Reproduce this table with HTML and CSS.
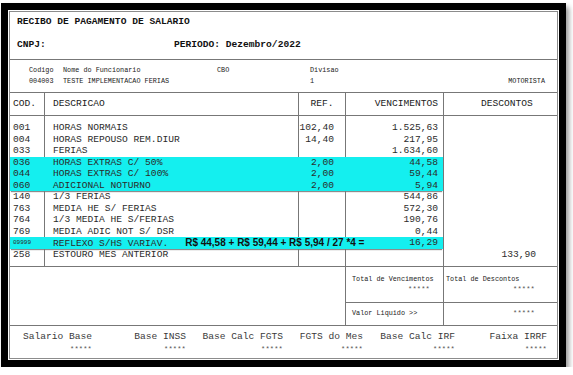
FILE: index.html
```html
<!DOCTYPE html>
<html lang="pt">
<head>
<meta charset="utf-8">
<title>Recibo de Pagamento de Salario</title>
<link rel="stylesheet" href="styles.css">
</head>
<body>
<div class="frame">
  <div class="sheet">
    <div class="head">
      <div class="title">RECIBO DE PAGAMENTO DE SALARIO</div>
      <div class="cnpj"><span class="cnpj-l">CNPJ:</span><span>PERIODO: Dezembro/2022</span></div>
    </div>
    <div class="emp">
      <div class="emp-row"><span>Codigo</span><span>Nome do Funcionario</span><span>CBO</span><span>Divisao</span><span></span></div>
      <div class="emp-row emp-val"><span>004003</span><span>TESTE IMPLEMENTACAO FERIAS</span><span></span><span>1</span><span>MOTORISTA</span></div>
    </div>
    <div class="tbl">
      <div class="r hdr">
        <div class="l"><div class="c1">COD.</div><div class="c2">DESCRICAO</div><div class="c3 ctr">REF.</div><div class="c4">VENCIMENTOS</div></div>
        <div class="c5 dhd">DESCONTOS</div>
      </div>
      <div class="r sp"><div class="l"><div class="c1"></div><div class="c2"></div><div class="c3"></div><div class="c4"></div></div><div class="c5"></div></div>
      <div class="r"><div class="l"><div class="c1">001</div><div class="c2">HORAS NORMAIS</div><div class="c3">102,40</div><div class="c4">1.525,63</div></div><div class="c5"></div></div>
      <div class="r"><div class="l"><div class="c1">004</div><div class="c2">HORAS REPOUSO REM.DIUR</div><div class="c3">14,40</div><div class="c4">217,95</div></div><div class="c5"></div></div>
      <div class="r"><div class="l"><div class="c1">033</div><div class="c2">FERIAS</div><div class="c3"></div><div class="c4">1.634,60</div></div><div class="c5"></div></div>
      <div class="r hl"><div class="l"><div class="c1">036</div><div class="c2">HORAS EXTRAS C/ 50%</div><div class="c3">2,00</div><div class="c4">44,58</div></div><div class="c5"></div></div>
      <div class="r hl"><div class="l"><div class="c1">044</div><div class="c2">HORAS EXTRAS C/ 100%</div><div class="c3">2,00</div><div class="c4">59,44</div></div><div class="c5"></div></div>
      <div class="r hl hl-end"><div class="l"><div class="c1">060</div><div class="c2">ADICIONAL NOTURNO</div><div class="c3">2,00</div><div class="c4">5,94</div></div><div class="c5"></div></div>
      <div class="r"><div class="l"><div class="c1">140</div><div class="c2">1/3 FERIAS</div><div class="c3"></div><div class="c4">544,86</div></div><div class="c5"></div></div>
      <div class="r"><div class="l"><div class="c1">763</div><div class="c2">MEDIA HE S/ FERIAS</div><div class="c3"></div><div class="c4">572,30</div></div><div class="c5"></div></div>
      <div class="r"><div class="l"><div class="c1">764</div><div class="c2">1/3 MEDIA HE S/FERIAS</div><div class="c3"></div><div class="c4">190,76</div></div><div class="c5"></div></div>
      <div class="r"><div class="l"><div class="c1">769</div><div class="c2">MEDIA ADIC NOT S/ DSR</div><div class="c3"></div><div class="c4">0,44</div></div><div class="c5"></div></div>
      <div class="r hl hl-end"><div class="l"><div class="c1 small">09999</div><div class="c2"><span>REFLEXO S/HS VARIAV.</span><span class="formula">R$ 44,58 + R$ 59,44 + R$ 5,94 / 27 *4 =</span></div><div class="c3"></div><div class="c4">16,29</div></div><div class="c5"></div></div>
      <div class="r"><div class="l"><div class="c1">258</div><div class="c2">ESTOURO MES ANTERIOR</div><div class="c3"></div><div class="c4"></div></div><div class="c5">133,90</div></div>
      <div class="r sp"><div class="l"><div class="c1"></div><div class="c2"></div><div class="c3"></div><div class="c4"></div></div><div class="c5"></div></div>
    </div>
    <div class="totals">
      <div class="t-empty"></div>
      <div class="t-col t-venc">
        <div class="t-top"><div class="lbl">Total de Vencimentos</div><div class="stars">*****</div></div>
        <div class="t-bot"><div class="lbl">Valor Liquido &gt;&gt;</div></div>
      </div>
      <div class="t-col t-desc">
        <div class="t-top"><div class="lbl">Total de Descontos</div><div class="stars">*****</div></div>
        <div class="t-bot"><div class="stars">*****</div></div>
      </div>
    </div>
    <div class="foot">
      <div class="f"><div class="fl">Salario Base</div><div class="stars">*****</div></div>
      <div class="f"><div class="fl">Base INSS</div><div class="stars">*****</div></div>
      <div class="f"><div class="fl">Base Calc FGTS</div><div class="stars">*****</div></div>
      <div class="f"><div class="fl">FGTS do Mes</div><div class="stars">*****</div></div>
      <div class="f"><div class="fl">Base Calc IRF</div><div class="stars">*****</div></div>
      <div class="f"><div class="fl">Faixa IRRF</div><div class="stars">*****</div></div>
    </div>
  </div>
</div>
</body>
</html>
```

FILE: styles.css
```css
* { box-sizing: border-box; }
html, body { margin: 0; background: #fff; }
body {
  padding: 3px 0 0 1px;
  font-family: "Liberation Mono", "Courier New", monospace;
  color: #2b2b2b;
}
.frame {
  width: 565px;
  height: 364px;
  border: 7px solid #000;
  padding: 1px;
  background: #fff;
  box-shadow: 3px 4px 5px rgba(0, 0, 0, 0.4);
}
.sheet {
  height: 100%;
  border: 1px solid #8c8c8c;
  display: flex;
  flex-direction: column;
}
/* header */
.head {
  padding: 4px 0 8px 7px;
  border-bottom: 1px solid #777;
  font-size: 9.6px;
  color: #111;
}
.title { line-height: 12px; font-weight: bold; }
.cnpj { margin-top: 11px; line-height: 12px; display: flex; font-weight: bold; }
.cnpj-l { width: 157px; }
/* employee */
.emp {
  padding: 5px 12px 6px 19px;
  border-bottom: 1px solid #777;
  font-size: 6.8px;
  color: #1a1a1a;
  white-space: nowrap;
}
.emp-row {
  display: grid;
  grid-template-columns: 34px 154px 93px 1fr auto;
  line-height: 10px;
}
.emp-val { margin-top: 1px; }
/* table */
.tbl { border-bottom: 1px solid #777; font-size: 9.6px; }
.r { display: flex; height: 11.5px; line-height: 11.5px; white-space: nowrap; }
.r .l { display: flex; width: 433px; flex: none; }
.c1 { width: 34px; padding-left: 3px; flex: none; }
.c2 { width: 254px; padding-left: 8px; border-left: 1px solid #777; flex: none; overflow: visible; }
.c3 { width: 47px; padding-right: 11px; text-align: right; border-left: 1px solid #777; flex: none; }
.c4 { width: 98px; padding-right: 5px; text-align: right; border-left: 1px solid #777; flex: none; }
.c5 { flex: 1; padding-right: 21px; text-align: right; border-left: 1px solid #777; }
.hdr { height: 23px; line-height: 22px; border-bottom: 1px solid #777; color: #222; }
.hdr .ctr { text-align: center; padding-right: 0; }
.hdr .dhd { text-align: left; padding-left: 37px; }
.sp { height: 6px; }
.hl .l { background: #14efef; }
.hl .c2, .hl .c3, .hl .c4 { border-left-color: #14efef; }
.hl-end .l { box-shadow: 0 2px 1px -1px rgba(0, 0, 0, 0.45); }
.small { font-size: 6px; }
.formula {
  position: relative;
  z-index: 1;
  margin-left: 17px;
  font-family: "Liberation Sans", Arial, sans-serif;
  font-weight: bold;
  font-size: 10px;
  color: #111;
}
/* totals */
.totals { display: flex; height: 59px; border-bottom: 1px solid #777; }
.t-empty { width: 335px; flex: none; }
.t-col { border-left: 1px solid #777; display: flex; flex-direction: column; }
.t-venc { width: 98px; flex: none; padding: 0 13px 0 6px; }
.t-desc { flex: 1; padding: 0 22px 0 2px; }
.t-top { height: 36px; padding-top: 7px; border-bottom: 1px solid #777; margin: 0 -22px 0 -2px; padding-left: 2px; padding-right: 22px; }
.t-venc .t-top { margin: 0 -13px 0 -6px; padding-left: 6px; padding-right: 13px; }
.t-bot { padding-top: 5px; }
.lbl { font-size: 6.8px; line-height: 10px; color: #1a1a1a; white-space: nowrap; }
.stars { font-size: 7px; line-height: 10px; text-align: right; color: #555; letter-spacing: 0.2px; }
/* footer */
.foot {
  flex: 1;
  display: grid;
  grid-template-columns: 82px 94px 97px 80px 92px 92px;
  padding-top: 6px;
}
.fl { font-size: 9.6px; line-height: 10px; text-align: right; color: #3a3a3a; white-space: nowrap; }
.f .stars { margin-top: 2px; }
```
